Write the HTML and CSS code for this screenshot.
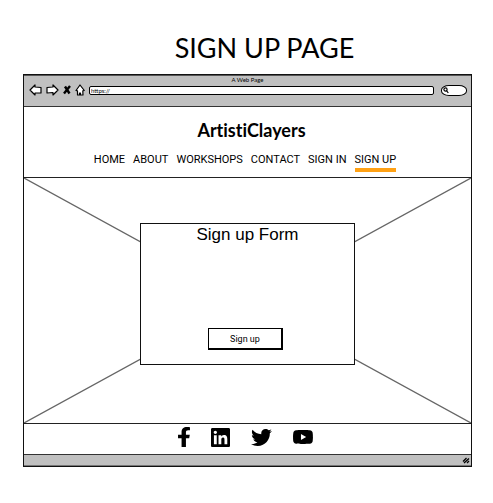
FILE: index.html
```html
<!DOCTYPE html>
<html lang="en">
<head>
<meta charset="utf-8">
<meta name="viewport" content="width=device-width, initial-scale=1">
<title>Sign Up Page</title>
<link rel="stylesheet" href="styles.css">
</head>
<body>
<h1 class="page-title">SIGN UP PAGE</h1>
<div class="browser">
  <div class="chrome">
    <div class="chrome-title">A Web Page</div>
    <div class="toolbar">
      <button class="tool" type="button" aria-label="Back"><svg width="13" height="12" viewBox="0 0 13 12"><path class="outline" d="M1 6 6 1v2l6 .5v5.500L6 9v2z"/></svg></button>
      <button class="tool" type="button" aria-label="Forward"><svg width="13" height="12" viewBox="0 0 13 12"><path class="outline" d="M12 6 7 1v2L1 3.500V9l6-.5V11z"/></svg></button>
      <button class="tool" type="button" aria-label="Stop"><svg width="8" height="12" viewBox="0 0 8 12"><path class="cross" d="m2 2.500 4.500 7M7 2 1 9.500"/></svg></button>
      <button class="tool" type="button" aria-label="Home"><svg width="10" height="12" viewBox="0 0 10 12"><path class="outline" d="M5 1 1 6.500l1.500.3L2.500 11h2V9h1v2h2.500L7.800 6.800 9.300 6.500z"/></svg></button>
      <input class="address" type="text" value="https://" aria-label="Address">
      <label class="search"><svg width="6" height="7" viewBox="0 0 6 7"><circle class="outline" cx="2.500" cy="2.500" r="1.600"/><path class="outline" d="m3.700 3.800 1.600 2.200"/></svg><input class="search-input" type="text" aria-label="Search"></label>
    </div>
  </div>
  <header class="site-header">
    <h2 class="brand">ArtistiClayers</h2>
    <nav class="nav">
      <a href="#">HOME</a>
      <a href="#">ABOUT</a>
      <a href="#">WORKSHOPS</a>
      <a href="#">CONTACT</a>
      <a href="#">SIGN IN</a>
      <a class="current" href="#">SIGN UP</a>
    </nav>
  </header>
  <main class="hero">
    <svg class="hero-image" viewBox="0 0 100 100" preserveAspectRatio="none" aria-hidden="true"><path d="M0 0 100 100M100 0 0 100"/></svg>
    <form class="card">
      <h3 class="card-title">Sign up Form</h3>
      <button class="submit" type="button">Sign up</button>
    </form>
  </main>
  <footer class="social">
    <a href="#" aria-label="Facebook"><svg width="12" height="20" viewBox="22 0 276 512" preserveAspectRatio="none"><path d="M279.140 288l14.220-92.660h-88.910v-60.130c0-25.350 12.420-50.060 52.240-50.060h40.420V6.260S260.430 0 225.360 0c-73.220 0-121.080 44.380-121.080 124.720v70.620H22.890V288h81.390v224h100.170V288z"/></svg></a>
    <a href="#" aria-label="LinkedIn"><svg width="19" height="19" viewBox="0 32 448 448"><path d="M416 32H31.900C14.300 32 0 46.500 0 64.300v383.400C0 465.500 14.300 480 31.900 480H416c17.600 0 32-14.500 32-32.300V64.300c0-17.800-14.400-32.300-32-32.300zM135.400 416H69V202.200h66.500V416zm-33.200-243c-21.300 0-38.500-17.300-38.500-38.500S80.900 96 102.200 96c21.200 0 38.500 17.300 38.500 38.500 0 21.300-17.200 38.500-38.500 38.500zm282.100 243h-66.400V312c0-24.800-.5-56.700-34.500-56.700-34.600 0-39.900 27-39.900 54.900V416h-66.400V202.200h63.700v29.200h.9c8.900-16.800 30.600-34.500 62.900-34.500 67.200 0 79.700 44.300 79.700 101.900V416z"/></svg></a>
    <a href="#" aria-label="Twitter"><svg width="21" height="17" viewBox="0 48 512 416"><path d="M459.370 151.716c.325 4.548.325 9.097.325 13.645 0 138.720-105.583 298.558-298.558 298.558-59.452 0-114.680-17.219-161.137-47.106 8.447.974 16.568 1.299 25.340 1.299 49.055 0 94.213-16.568 130.274-44.832-46.132-.975-84.792-31.188-98.112-72.772 6.498.974 12.995 1.624 19.818 1.624 9.421 0 18.843-1.300 27.614-3.573-48.081-9.747-84.143-51.980-84.143-102.985v-1.299c13.969 7.797 30.214 12.670 47.431 13.319-28.264-18.843-46.781-51.005-46.781-87.391 0-19.492 5.197-37.360 14.294-52.954 51.655 63.675 129.300 105.258 216.365 109.807-1.624-7.797-2.599-15.918-2.599-24.040 0-57.828 46.782-104.934 104.934-104.934 30.213 0 57.502 12.670 76.670 33.137 23.715-4.548 46.456-13.320 66.599-25.340-7.798 24.366-24.366 44.833-46.132 57.827 21.117-2.273 41.584-8.122 60.426-16.243-14.292 20.791-32.161 39.308-52.628 54.253z"/></svg></a>
    <a href="#" aria-label="YouTube"><svg width="20" height="14" viewBox="14 64 548 384"><path d="M549.655 124.083c-6.281-23.650-24.787-42.276-48.284-48.597C458.781 64 288 64 288 64S117.220 64 74.629 75.486c-23.497 6.322-42.003 24.947-48.284 48.597-11.412 42.867-11.412 132.305-11.412 132.305s0 89.438 11.412 132.305c6.281 23.650 24.787 41.500 48.284 47.821C117.220 448 288 448 288 448s170.780 0 213.371-11.486c23.497-6.321 42.003-24.171 48.284-47.821 11.412-42.867 11.412-132.305 11.412-132.305s0-89.438-11.412-132.305zm-317.510 213.508V175.185l142.739 81.205-142.739 81.201z"/></svg></a>
  </footer>
  <div class="status-bar"><svg width="8" height="7" viewBox="0 0 8 7"><path class="grip" d="M1 4.500 4.500 1M2 6 7 1.500M5 6 7 4"/></svg></div>
</div>
</body>
</html>
```
FILE: styles.css
```css
* {
  box-sizing: border-box;
}

body {
  margin: 0;
  padding: 32px 21px 36px 23px;
  background: #fff;
  color: #000;
  font-family: Lato, "Liberation Sans", sans-serif;
  font-variant-ligatures: none;
}

h1, h2, h3 {
  margin: 0;
}

a {
  color: inherit;
  text-decoration: none;
}

svg {
  display: block;
}

.page-title {
  padding-left: 34px;
  margin-bottom: 10px;
  font-size: 27px;
  line-height: 32px;
  font-weight: 400;
  text-align: center;
}

.browser {
  border: 1px solid #111;
}

.chrome {
  height: 32px;
  background: #c0c0c0;
  border-top: 1px solid #555;
  border-bottom: 1px solid #333;
}

.chrome-title {
  font-size: 6px;
  line-height: 8px;
  text-align: center;
}

.toolbar {
  display: flex;
  align-items: center;
  gap: 4px;
  padding: 0 4px 0 5px;
}

.tool {
  padding: 0;
  border: 0;
  background: none;
}

.outline {
  fill: #fff;
  stroke: #000;
  stroke-width: 1.2;
  stroke-linejoin: round;
}

.cross {
  fill: none;
  stroke: #000;
  stroke-width: 2.4;
}

.address {
  flex: 1;
  min-width: 0;
  height: 9px;
  padding: 0 1px;
  border: 1px solid #000;
  border-radius: 2px;
  font-family: inherit;
  font-size: 6px;
  background: #fff;
}

.search {
  display: flex;
  align-items: center;
  width: 26px;
  height: 11px;
  margin-left: 3px;
  padding-left: 1px;
  border: 1px solid #000;
  border-radius: 8px / 5px;
  background: #fff;
}

.search-input {
  flex: 1;
  min-width: 0;
  height: 7px;
  padding: 0;
  border: 0;
  background: none;
  font-size: 6px;
}

.site-header {
  padding: 13px 0 5px;
}

.brand {
  padding-left: 8px;
  font-size: 18px;
  line-height: 20px;
  font-weight: 700;
  text-align: center;
}

.nav {
  display: flex;
  justify-content: center;
  gap: 8px;
  margin-top: 12px;
  padding-right: 5px;
  font-family: Roboto, "Liberation Sans", sans-serif;
  font-size: 11px;
  line-height: 16px;
}

.nav a {
  border-bottom: 4px solid transparent;
}

.nav .current {
  border-color: #ffa114;
}

.hero {
  position: relative;
  display: grid;
  place-items: center;
  height: 247px;
  padding-bottom: 13px;
  border: solid #222;
  border-width: 1px 0;
}

.hero-image {
  position: absolute;
  inset: 0;
  width: 100%;
  height: 100%;
}

.hero-image path {
  fill: none;
  stroke: #666;
  stroke-width: 1.3;
  vector-effect: non-scaling-stroke;
}

.card {
  position: relative;
  display: flex;
  flex-direction: column;
  justify-content: space-between;
  align-items: center;
  width: 48%;
  height: 142px;
  padding: 0 0 14px;
  border: 1px solid #111;
  background: #fff;
}

.card-title {
  font-family: "Liberation Sans", sans-serif;
  font-size: 17px;
  line-height: 22px;
  font-weight: 400;
}

.submit {
  height: 22px;
  margin-right: 4px;
  padding: 0 21px;
  border: 1px solid #000;
  border-width: 1px 2px 2px 1px;
  background: #fff;
  color: #000;
  font-family: Roboto, "Liberation Sans", sans-serif;
  font-size: 9px;
}

.social {
  display: flex;
  align-items: center;
  justify-content: center;
  gap: 21px;
  height: 30px;
  padding: 0 4px 4px 0;
}

.status-bar {
  display: flex;
  align-items: center;
  justify-content: flex-end;
  height: 12px;
  padding-right: 1px;
  border-top: 1px solid #333;
  border-bottom: 1px solid #777;
  background: #c0c0c0;
}

.grip {
  fill: none;
  stroke: #000;
  stroke-width: 1.3;
}
```
